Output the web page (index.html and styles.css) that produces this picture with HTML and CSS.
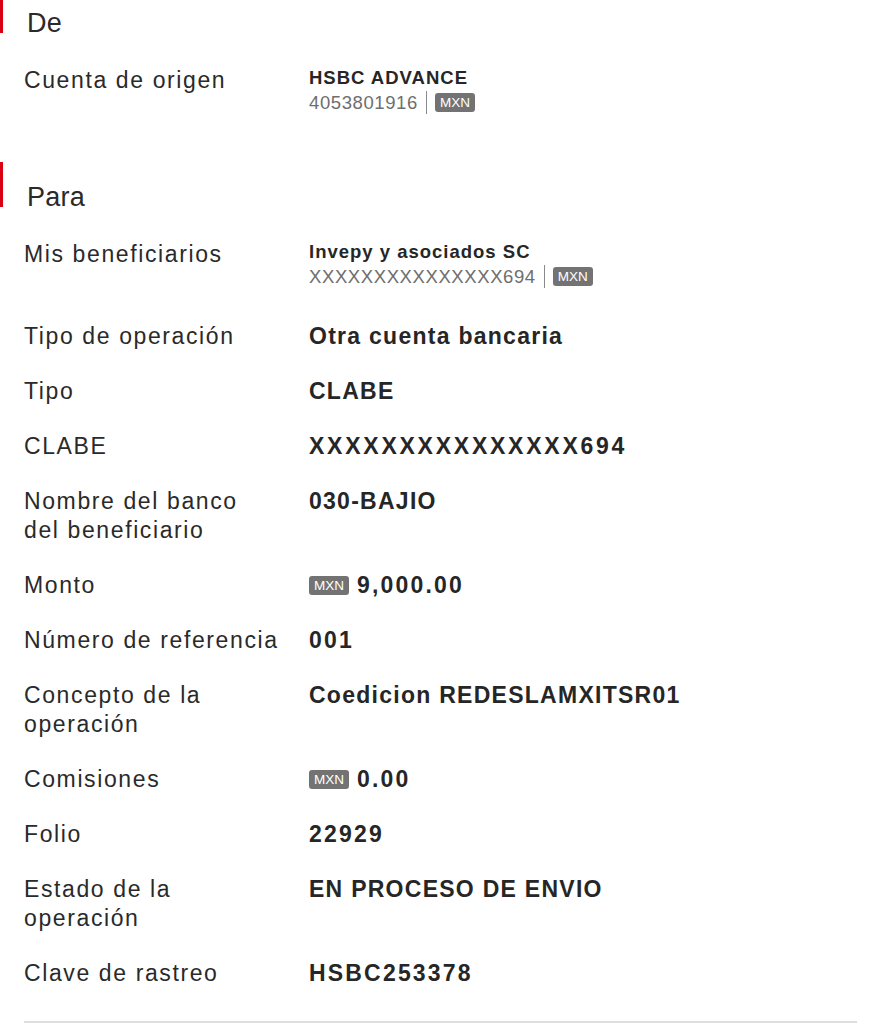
FILE: index.html
```html
<!DOCTYPE html>
<html lang="es">
<head>
<meta charset="utf-8">
<title>Detalle de transferencia</title>
<link rel="stylesheet" href="styles.css">
</head>
<body>
<main class="page">
  <section class="section section-from">
    <h2 class="heading">De</h2>
    <div class="row row-account">
      <div class="label">Cuenta de origen</div>
      <div class="value account">
        <div class="acc-name">HSBC ADVANCE</div>
        <div class="acc-line"><span class="acc-num">4053801916</span><span class="sep"></span><span class="badge">MXN</span></div>
      </div>
    </div>
  </section>

  <section class="section section-to">
    <h2 class="heading">Para</h2>
    <div class="row row-account">
      <div class="label">Mis beneficiarios</div>
      <div class="value account">
        <div class="acc-name">Invepy y asociados SC</div>
        <div class="acc-line"><span class="acc-num">XXXXXXXXXXXXXXX694</span><span class="sep"></span><span class="badge">MXN</span></div>
      </div>
    </div>
    <div class="row"><div class="label">Tipo de operación</div><div class="value">Otra cuenta bancaria</div></div>
    <div class="row"><div class="label">Tipo</div><div class="value">CLABE</div></div>
    <div class="row"><div class="label">CLABE</div><div class="value masked">XXXXXXXXXXXXXXX694</div></div>
    <div class="row"><div class="label">Nombre del banco<br>del beneficiario</div><div class="value">030-BAJIO</div></div>
    <div class="row"><div class="label">Monto</div><div class="value amount"><span class="badge">MXN</span><span class="num">9,000.00</span></div></div>
    <div class="row"><div class="label">Número de referencia</div><div class="value num">001</div></div>
    <div class="row"><div class="label">Concepto de la<br>operación</div><div class="value">Coedicion REDESLAMXITSR01</div></div>
    <div class="row"><div class="label">Comisiones</div><div class="value amount"><span class="badge">MXN</span><span class="num">0.00</span></div></div>
    <div class="row"><div class="label">Folio</div><div class="value num">22929</div></div>
    <div class="row"><div class="label">Estado de la<br>operación</div><div class="value">EN PROCESO DE ENVIO</div></div>
    <div class="row"><div class="label">Clave de rastreo</div><div class="value num">HSBC253378</div></div>
  </section>
  <hr class="divider">
</main>
</body>
</html>
```

FILE: styles.css
```css
html, body {
  margin: 0;
  padding: 0;
  background: #ffffff;
}

body {
  font-family: "Liberation Sans", Arial, sans-serif;
  color: #333333;
}

.page {
  margin-top: -12px;
  width: 869px;
}

.section-to {
  margin-top: 27px;
}

.heading {
  margin: 0 0 20px 0;
  height: 45px;
  box-sizing: border-box;
  padding: 22px 0 0 24px;
  border-left: 3px solid #db0011;
  font-size: 27px;
  line-height: 26px;
  font-weight: normal;
  letter-spacing: 0.01em;
  color: #2a2a2a;
}

.row {
  display: flex;
  align-items: flex-start;
  padding: 13px 12px 13px 24px;
}

.row-account {
  padding-bottom: 20px;
}

.label {
  width: 285px;
  flex: none;
  font-size: 23px;
  line-height: 29px;
  letter-spacing: 0.07em;
  color: #2a2a2a;
}

.value {
  flex: 1;
  font-size: 23px;
  line-height: 29px;
  font-weight: bold;
  letter-spacing: 0.055em;
  color: #262626;
}

.value.num,
.num {
  letter-spacing: 0.095em;
}

.value.masked {
  letter-spacing: 0.12em;
}

.acc-name {
  font-size: 18.5px;
  line-height: 23px;
  letter-spacing: 1px;
}

.acc-line {
  display: flex;
  align-items: center;
  height: 26px;
  font-weight: normal;
}

.acc-num {
  font-size: 18.5px;
  letter-spacing: 0.6px;
  color: #6e6e6e;
}

.sep {
  width: 1px;
  height: 23px;
  background: #8a8a8a;
  margin: 0 8px 0 8px;
}

.badge {
  display: inline-block;
  background: #737373;
  color: #ffffff;
  font-size: 13.5px;
  line-height: 19px;
  height: 19px;
  padding: 0 5px;
  border-radius: 3px;
  font-weight: normal;
  letter-spacing: 0;
}

.amount {
  display: flex;
  align-items: center;
  gap: 8px;
}

.divider {
  margin: 20px 12px 0 24px;
  border: none;
  border-top: 2px solid #dedede;
  height: 0;
}
```
